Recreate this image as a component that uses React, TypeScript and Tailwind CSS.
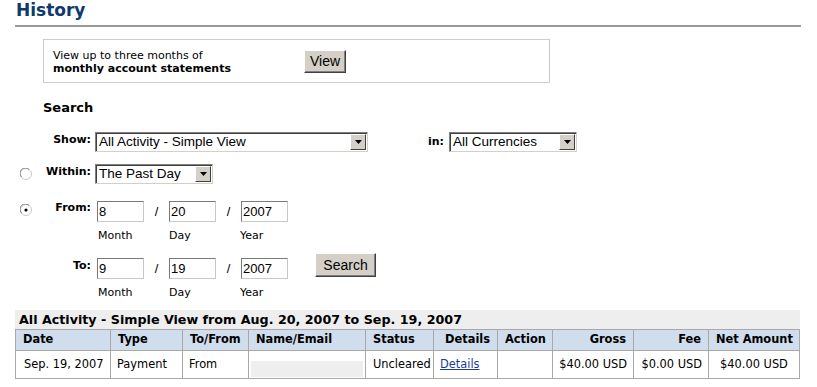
import React from 'react';

const verdana = { fontFamily: '"DejaVu Sans", Verdana, sans-serif' };

// Windows-classic style dropdown
const Select: React.FC<{ value: string; width: string }> = ({ value, width }) => (
  <div
    className={`${width} h-[20px] flex items-stretch bg-white border border-t-[#808080] border-l-[#808080] border-b-[#d4d0c8] border-r-[#d4d0c8] shadow-[inset_1px_1px_0_#404040]`}
  >
    <div className="flex-1 pl-[3px] text-[13.5px] leading-[18px] text-black font-['Liberation_Sans',Arial,sans-serif] whitespace-nowrap overflow-hidden">
      {value}
    </div>
    <div className="w-[16px] my-[1px] mr-[1px] bg-[#d4d0c8] border border-t-white border-l-white border-b-[#404040] border-r-[#404040] flex items-center justify-center">
      <svg width="7" height="4" viewBox="0 0 7 4">
        <path d="M0 0h7L3.5 4z" fill="#000" />
      </svg>
    </div>
  </div>
);

const TextBox: React.FC<{ value: string }> = ({ value }) => (
  <div className="w-[47px] h-[21px] bg-white border border-t-[#7a7a7a] border-l-[#7a7a7a] border-b-[#c8c8c8] border-r-[#c8c8c8] pl-[1px] text-[13px] leading-[19px] text-black font-['Liberation_Sans',Arial,sans-serif]">
    {value}
  </div>
);

const Button: React.FC<{ label: string; className?: string }> = ({ label, className = '' }) => (
  <div
    className={`bg-[#d4d0c8] border border-t-white border-l-white border-b-[#404040] border-r-[#404040] shadow-[inset_-1px_-1px_0_#808080] text-[14px] text-black flex items-center justify-center font-['Liberation_Sans',Arial,sans-serif] ${className}`}
  >
    {label}
  </div>
);

const Radio: React.FC<{ checked?: boolean }> = ({ checked }) => (
  <svg width="12" height="12" viewBox="0 0 12 12">
    <circle cx="6" cy="6" r="5.5" fill="#fff" stroke="#c8c8c8" />
    <path d="M1.5 9A5 5 0 0 1 9 1.5" fill="none" stroke="#808080" />
    {checked && <circle cx="6" cy="6" r="1.6" fill="#000" />}
  </svg>
);

const DateRow: React.FC<{ m: string; d: string; y: string }> = ({ m, d, y }) => (
  <div>
    <div className="flex items-center">
      <TextBox value={m} />
      <span className="w-[25px] text-center text-[13px] font-['Liberation_Sans',Arial,sans-serif]">/</span>
      <TextBox value={d} />
      <span className="w-[25px] text-center text-[13px] font-['Liberation_Sans',Arial,sans-serif]">/</span>
      <TextBox value={y} />
    </div>
    <div className="flex text-[11px] leading-[13px] mt-[7px] text-black">
      <span className="w-[72px] pl-[1px]">Month</span>
      <span className="w-[71px]">Day</span>
      <span>Year</span>
    </div>
  </div>
);

const cols = [
  { h: 'Date', w: 'w-[95px]', a: 'text-left' },
  { h: 'Type', w: 'w-[72px]', a: 'text-left' },
  { h: 'To/From', w: 'w-[66px]', a: 'text-left' },
  { h: 'Name/Email', w: 'w-[117px]', a: 'text-left' },
  { h: 'Status', w: 'w-[68px]', a: 'text-left' },
  { h: 'Details', w: 'w-[64px]', a: 'text-right' },
  { h: 'Action', w: 'w-[55px]', a: 'text-center' },
  { h: 'Gross', w: 'w-[81px]', a: 'text-right' },
  { h: 'Fee', w: 'w-[75px]', a: 'text-right' },
  { h: 'Net Amount', w: 'w-[91px]', a: 'text-center' },
];

export default function App() {
  return (
    <div className="w-[817px] h-[387px] bg-white overflow-hidden text-black" style={verdana}>
      <div className="pl-[16px] pr-[16px] pt-[0px]">
        <h1 className="text-[17px] leading-[20px] font-bold text-[#0f3a69]">History</h1>
        <div className="mt-[5px] h-[2px] bg-[#999999] -ml-[1px]" />

        {/* statements box */}
        <div className="ml-[27px] mt-[12px] w-[507px] h-[44px] border border-[#cccccc] flex items-center pl-[9px]">
          <div className="w-[251px] text-[11px] leading-[13px] pt-[1px]">
            <div>View up to three months of</div>
            <div className="font-bold">monthly account statements</div>
          </div>
          <Button label="View" className="w-[42px] h-[23px] mt-[1px]" />
        </div>

        <div className="ml-[27px] mt-[17px] text-[13px] leading-[16px] font-bold">Search</div>

        {/* search form */}
        <div className="mt-[16px] text-[11px]">
          <div className="flex items-start">
            <div className="w-[28px]" />
            <div className="w-[47px] text-right font-bold pt-[1px] leading-[13px]">Show:</div>
            <div className="ml-[4px]">
              <Select value="All Activity - Simple View" width="w-[273px]" />
            </div>
            <div className="w-[76px] text-right font-bold pt-[3px] leading-[13px]">in:</div>
            <div className="ml-[5px]">
              <Select value="All Currencies" width="w-[128px]" />
            </div>
          </div>

          <div className="flex items-start mt-[12px]">
            <div className="w-[28px] pl-[4px] pt-[4px]">
              <Radio />
            </div>
            <div className="w-[47px] text-right font-bold pt-[1px] leading-[13px]">Within:</div>
            <div className="ml-[4px]">
              <Select value="The Past Day" width="w-[118px]" />
            </div>
          </div>

          <div className="flex items-start mt-[17px]">
            <div className="w-[28px] pl-[4px] pt-[3px]">
              <Radio checked />
            </div>
            <div className="w-[47px] text-right font-bold pt-[0px] leading-[13px]">From:</div>
            <div className="ml-[6px]">
              <DateRow m="8" d="20" y="2007" />
            </div>
          </div>

          <div className="flex items-start mt-[16px]">
            <div className="w-[28px]" />
            <div className="w-[47px] text-right font-bold pt-[1px] leading-[13px]">To:</div>
            <div className="ml-[6px]">
              <DateRow m="9" d="19" y="2007" />
            </div>
            <Button label="Search" className="ml-[27px] -mt-[5px] w-[61px] h-[24px]" />
          </div>
        </div>

        {/* results table */}
        <div className="mt-[11px] w-[785px] -ml-[1px]">
          <div className="bg-[#eeeeee] h-[19px] pl-[4px] text-[12.7px] leading-[19px] font-bold whitespace-nowrap">
            All Activity - Simple View from Aug. 20, 2007 to Sep. 19, 2007
          </div>
          <table className="border-collapse text-[11.4px] w-[785px] table-fixed">
            <thead>
              <tr className="bg-[#cfdded] h-[21px]">
                {cols.map((c) => (
                  <th
                    key={c.h}
                    className={`${c.w} ${c.a} border border-[#a8a8a8] px-[7px] font-bold whitespace-nowrap`}
                  >
                    {c.h}
                  </th>
                ))}
              </tr>
            </thead>
            <tbody>
              <tr className="h-[28px]">
                <td className="border border-[#a8a8a8] px-[8px] whitespace-nowrap">Sep. 19, 2007</td>
                <td className="border border-[#a8a8a8] px-[6px]">Payment</td>
                <td className="border border-[#a8a8a8] px-[6px]">From</td>
                <td className="border border-[#a8a8a8] px-[2px] align-bottom pb-[1px]">
                  <div className="h-[16px] bg-[#eeeeee]" />
                </td>
                <td className="border border-[#a8a8a8] px-[7px]">Uncleared</td>
                <td className="border border-[#a8a8a8] px-[6px]">
                  <span className="text-[#1a3c9c] underline">Details</span>
                </td>
                <td className="border border-[#a8a8a8]" />
                <td className="border border-[#a8a8a8] px-[6px] text-right whitespace-nowrap">$40.00 USD</td>
                <td className="border border-[#a8a8a8] px-[6px] text-right whitespace-nowrap">$0.00 USD</td>
                <td className="border border-[#a8a8a8] px-[6px] text-center whitespace-nowrap">$40.00 USD</td>
              </tr>
            </tbody>
          </table>
        </div>
      </div>
    </div>
  );
}
